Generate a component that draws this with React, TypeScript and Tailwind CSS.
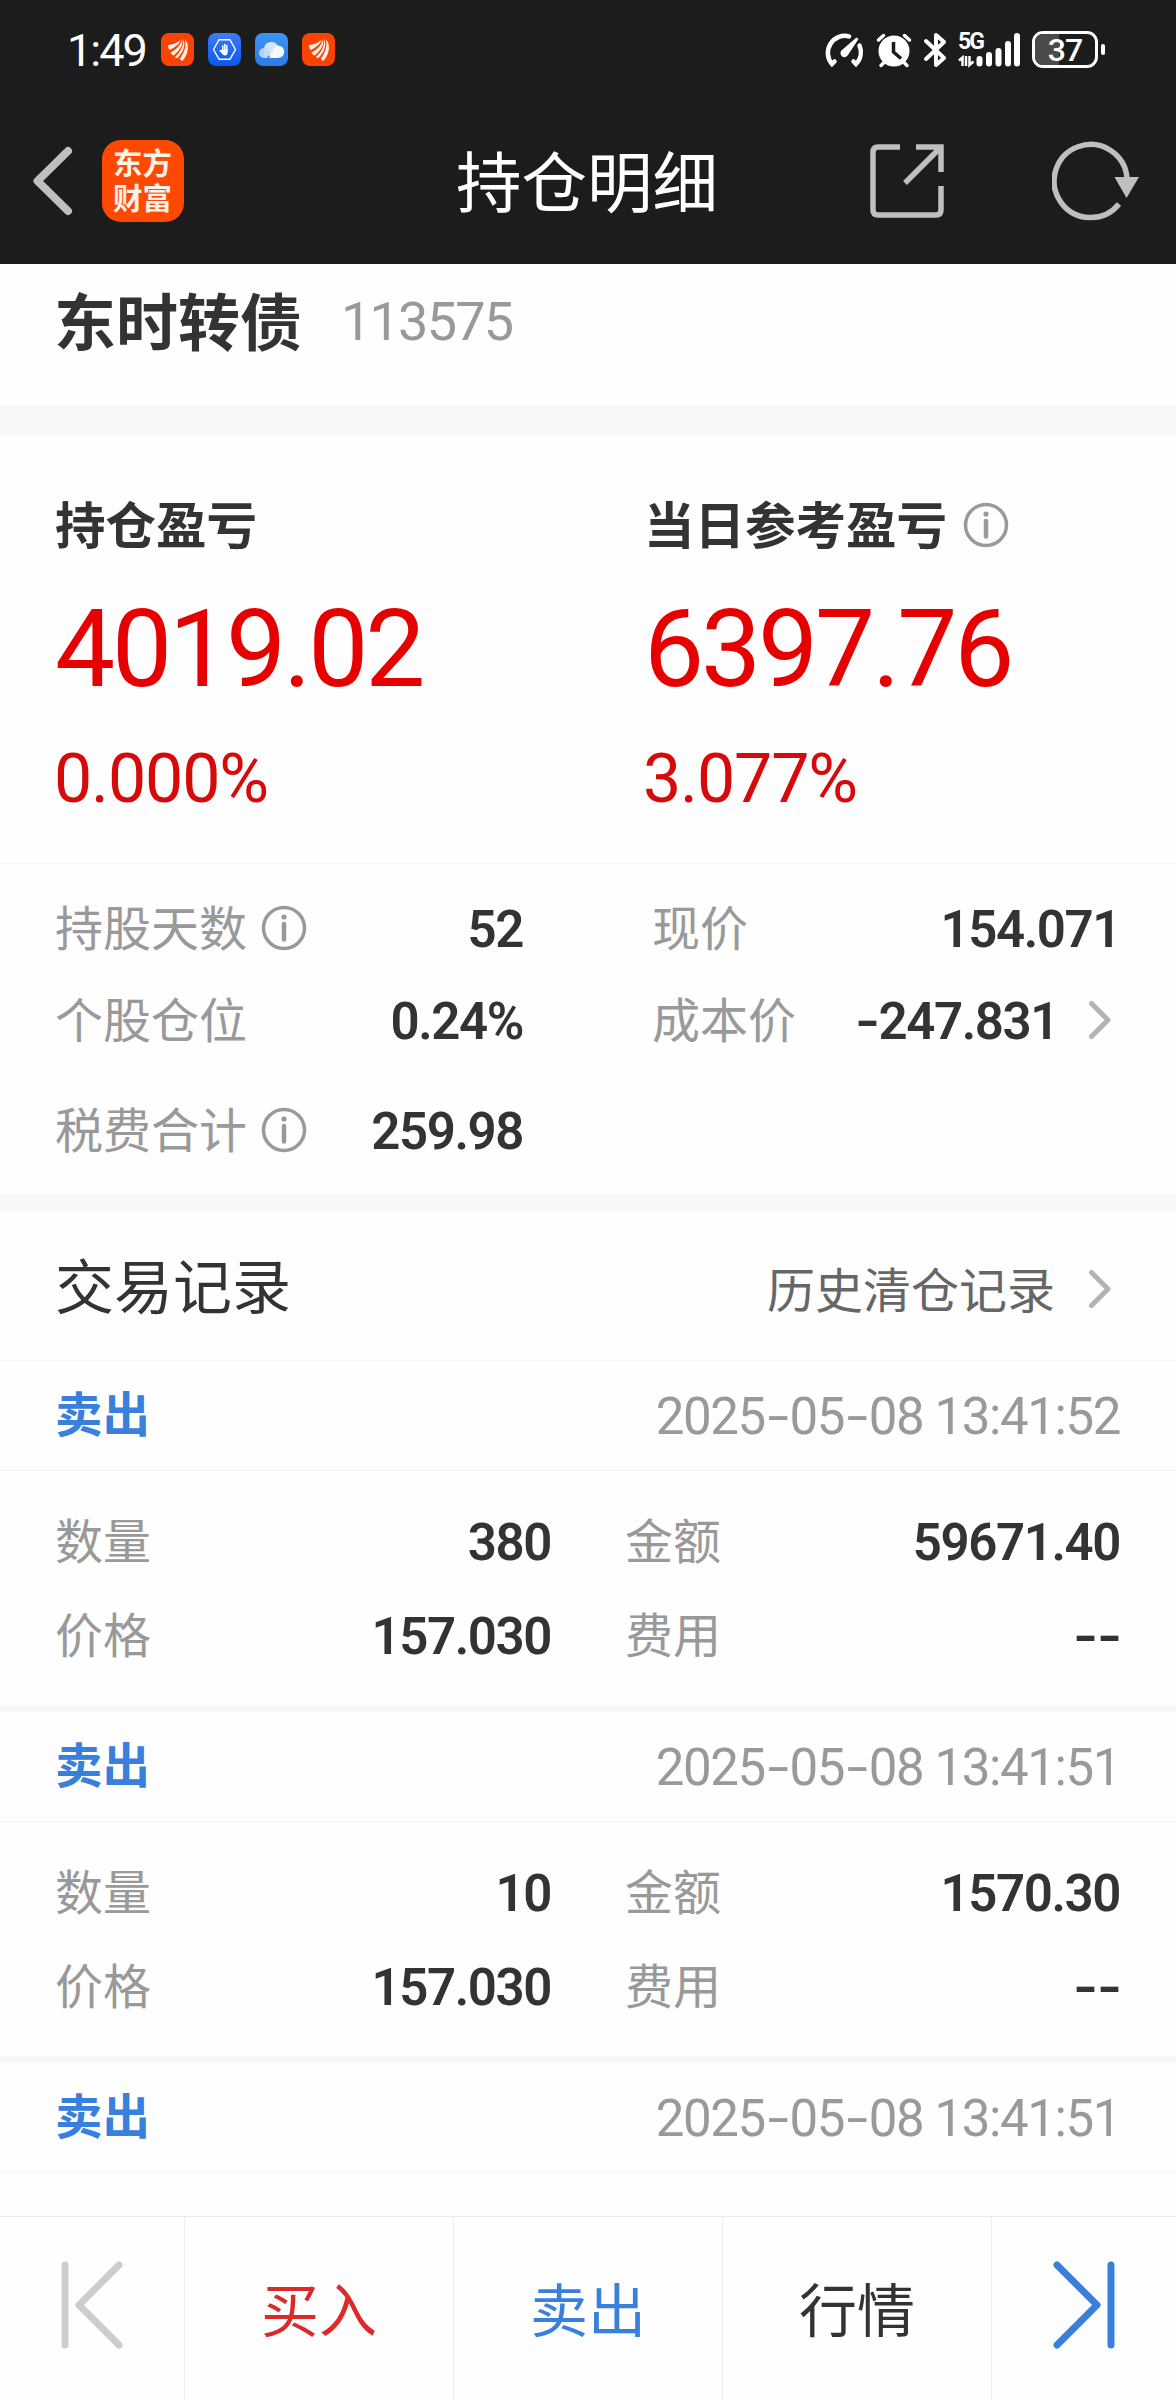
import React from "react";

const cjk = "font-['Noto_Sans_CJK_SC',sans-serif]";
const num = "font-[Roboto,'Noto_Sans_CJK_SC',sans-serif]";

const records = [
  {
    time: "2025-05-08 13:41:52",
    amount: "380",
    price: "157.030",
    total: "59671.40",
    fee: "--",
  },
  {
    time: "2025-05-08 13:41:51",
    amount: "10",
    price: "157.030",
    total: "1570.30",
    fee: "--",
  },
  { time: "2025-05-08 13:41:51" },
];

const EastMoneyBadge = () => (
  <svg width="33" height="33" viewBox="0 0 33 33">
    <rect width="33" height="33" rx="8" fill="#fa4300" />
    <g fill="#fff1ea">
      <path d="M6.800 12.200C11.500 11.500 16 9.800 19.500 7C18.500 11 14 14.500 8.500 17Q7 15 6.800 12.200Z" />
      <path d="M9.500 19.500C15.500 16.500 19.500 12.500 21 6.300C22.500 12 18.500 18 12.500 22.500Q10.500 21.800 9.500 19.500Z" />
      <path d="M14 24C19.500 19 22.500 13.500 22.300 6C25 13 22 19 16.500 25Q15 25.200 14 24Z" />
      <path d="M18.800 25.500C23.500 19.500 25.500 13 24 6.200C28.500 11 28 20 21.500 28Q20 27.500 18.800 25.500Z" />
    </g>
  </svg>
);

const HandBadge = () => (
  <svg width="33" height="33" viewBox="0 0 33 33">
    <defs>
      <linearGradient id="hand" x1="0" y1="0" x2="0" y2="1">
        <stop offset="0" stopColor="#3f7cf8" />
        <stop offset="1" stopColor="#0b57f0" />
      </linearGradient>
    </defs>
    <rect width="33" height="33" rx="8" fill="url(#hand)" />
    <path
      d="M11 6.800H22L27.500 16.500L22 26.200H11L5.500 16.500Z"
      fill="none"
      stroke="#fff"
      strokeWidth="1.400"
      strokeLinejoin="round"
    />
    <path
      d="M14.800 13V18M16.800 11.500V18M18.800 12.500V19M12 17.500L15 20"
      stroke="#fff"
      strokeWidth="1.500"
      strokeLinecap="round"
    />
    <path d="M12 17L19.600 16.500V19.500Q19.500 22.500 17 22.500Q15 22.500 12 18Z" fill="#fff" />
  </svg>
);

const CloudBadge = () => (
  <svg width="33" height="33" viewBox="0 0 33 33">
    <defs>
      <linearGradient id="sky" x1="0" y1="0" x2="0" y2="1">
        <stop offset="0" stopColor="#3a97f3" />
        <stop offset="1" stopColor="#2f78ea" />
      </linearGradient>
    </defs>
    <rect width="33" height="33" rx="8" fill="url(#sky)" />
    <path d="M9 15A7.500 7.500 0 0 1 23 13L15 24Z" fill="#d5e5fb" />
    <circle cx="9" cy="20" r="5" fill="#b5d1f8" />
    <path d="M9 15Q14 15 15 20L12 25H9Z" fill="#c4daf9" />
    <path d="M14 25C17 22 17 14.500 23 12.500A6.200 6.200 0 0 1 23 25Z" fill="#f6faff" />
  </svg>
);

const StatusIcons = () => (
  <div className="flex items-center text-white">
    <svg width="40" height="36" viewBox="0 0 40 36" className="mr-[12px]">
      <g fill="none" stroke="#fff" strokeWidth="4.500" strokeLinecap="round">
        <path d="M25 4.400A17 17 0 0 0 8 32L10.500 29.500" />
        <path d="M35.500 13.500A17 17 0 0 1 32 32L29.500 29.500" />
      </g>
      <path d="M32.500 5.500L34.500 7L24 23A4 4 0 1 1 18 18Z" fill="#fff" />
    </svg>
    <svg width="36" height="36" viewBox="0 0 36 36" className="mr-[12px]">
      <circle cx="18" cy="19" r="15.500" fill="#fff" />
      <g stroke="#fff" strokeWidth="3.500" strokeLinecap="round">
        <path d="M2.500 8L7.500 3.500M33.500 8L28.500 3.500M5 33.500L9 29.500M31 33.500L27 29.500" />
      </g>
      <path d="M17.500 10V20L25 26.500" fill="none" stroke="#1c1c1c" strokeWidth="3.500" />
    </svg>
    <svg width="22" height="36" viewBox="0 0 22 36" className="mr-[12px]">
      <path
        d="M2 9L20 26L12 33V3L20 10L2 27"
        fill="none"
        stroke="#fff"
        strokeWidth="4"
        strokeLinecap="round"
        strokeLinejoin="round"
      />
    </svg>
    <div className="relative mr-[12px] h-9 w-[62px]">
      <span
        className={`${num} absolute top-px left-0 text-[23px] leading-[18px] font-bold tracking-[-2px]`}
      >
        5G
      </span>
      <svg width="62" height="36" viewBox="0 0 62 36">
        <g stroke="#fff" strokeWidth="2.500" fill="none">
          <path d="M1 28.500L4.500 25.500V34M8 24V34" />
          <path d="M11.500 24V33L15.500 29.500" />
        </g>
        <g stroke="#fff" strokeWidth="6" strokeLinecap="round">
          <path d="M21.500 27V31.500M31 23V31.500M40.500 19V31.500M50 12V31.500M59 4V31.500" />
        </g>
      </svg>
    </div>
    <div className="relative h-[37px] w-[66px] overflow-hidden rounded-[11px] border-[3px] border-white">
      <div className="h-full w-6 bg-[#4b4b4b]" />
      <span
        className={`${num} absolute inset-0 text-center text-[32px] leading-[32px] font-medium tracking-[-1px]`}
      >
        37
      </span>
    </div>
    <div className="ml-[3px] h-[11px] w-1 rounded-full bg-white" />
  </div>
);

const InfoIcon = () => (
  <svg width="46" height="46" viewBox="0 0 46 46" className="shrink-0">
    <circle cx="23" cy="23" r="20.500" fill="none" stroke="#999" strokeWidth="3.500" />
    <circle cx="23" cy="12" r="2.600" fill="#999" />
    <path d="M23 19V34.500" stroke="#999" strokeWidth="4.500" strokeLinecap="round" />
  </svg>
);

const RightArrow = () => (
  <svg width="24" height="40" viewBox="0 0 24 40" className="shrink-0">
    <path
      d="M3.500 3.500L20 20L3.500 36.500"
      fill="none"
      stroke="#b3b3b3"
      strokeWidth="5"
      strokeLinecap="round"
      strokeLinejoin="round"
    />
  </svg>
);

// Roboto's hyphen is short next to its figures, so it is widened a little
const Figures = ({ text, hyphen }: { text: string; hyphen: string }) => (
  <>
    {text.split(/(-)/).map((part, index) =>
      part === "-" ? (
        <span key={index} className={`inline-block ${hyphen}`}>
          -
        </span>
      ) : (
        part
      ),
    )}
  </>
);

const Label = ({ children }: { children: React.ReactNode }) => (
  <span className="-ml-px pb-[7px] text-[48px] leading-none font-normal text-[#999]">
    {children}
  </span>
);

const Value = ({ text }: { text: string }) => (
  <span
    className={`${num} pt-[2px] text-[51px] leading-none font-semibold tracking-[-1.4px] text-[#333]`}
  >
    <Figures text={text} hyphen="mx-[3px] scale-x-[1.3]" />
  </span>
);

const Profit = ({ amount, percent }: { amount: string; percent: string }) => (
  <>
    <div
      className={`${num} mt-[31px] text-[107px] leading-[126px] tracking-[-3.1px] text-[#e60000]`}
    >
      {amount}
    </div>
    <div
      className={`${num} mt-[25px] -ml-px text-[68px] leading-[82px] tracking-[-1.1px] text-[#d60a0a]`}
    >
      {percent}
    </div>
  </>
);

const App = () => {
  return (
    <div
      className={`${cjk} flex h-[2400px] w-[1176px] flex-col overflow-hidden bg-[#fefefe] whitespace-nowrap text-[#333]`}
    >
      <header className="h-[264px] shrink-0 bg-[#1c1c1c]">
        <div className="flex h-[99px] items-center pl-[67px]">
          <span
            className={`${num} w-[94px] pt-[2px] text-[45px] leading-none tracking-[-2px] text-white`}
          >
            1:49
          </span>
          <div className="flex gap-[14px]">
            <EastMoneyBadge />
            <HandBadge />
            <CloudBadge />
            <EastMoneyBadge />
          </div>
          <div className="mr-[71px] ml-auto">
            <StatusIcons />
          </div>
        </div>
        <div className="flex h-[165px] items-center pr-9 pb-px pl-[30px]">
          <div className="flex w-[350px] items-center">
            <svg width="44" height="70" viewBox="0 0 44 70">
              <path
                d="M38 5L7.500 35L38 65"
                fill="none"
                stroke="#bfbfbf"
                strokeWidth="8"
                strokeLinecap="round"
                strokeLinejoin="round"
              />
            </svg>
            <div className="ml-7 flex h-[82px] w-[82px] items-center justify-center rounded-[19px] bg-[#ff4800] pb-1">
              <span className="w-[60px] text-[29.5px] leading-[35px] font-bold break-all whitespace-normal text-[#fff3ec]">
                东方财富
              </span>
            </div>
          </div>
          <h1 className="flex-1 pb-[5px] pl-1 text-center text-[65.5px] leading-none font-normal text-white">
            持仓明细
          </h1>
          <div className="flex w-[350px] items-center justify-end">
            <svg width="76" height="76" viewBox="0 0 76 76" className="mr-[107px]">
              <g fill="none" stroke="#bfbfbf" strokeWidth="5.500">
                <path d="M31 4H9Q4 4 4 9V67Q4 72 9 72H67Q72 72 72 67V43" />
                <path d="M47 4H72V29M71 5L36 40" />
              </g>
            </svg>
            <svg width="88" height="80" viewBox="0 0 88 80">
              <path
                d="M75 37A36.500 36.500 0 1 0 67 63"
                fill="none"
                stroke="#bfbfbf"
                strokeWidth="5.500"
              />
              <path d="M62.500 36H87L74.500 57Z" fill="#bfbfbf" />
            </svg>
          </div>
        </div>
      </header>

      <div className="flex h-[142px] shrink-0 items-center pb-[28px] pl-[54px]">
        <h2 className="pb-[5px] text-[62px] leading-none font-semibold">东时转债</h2>
        <span
          className={`${num} ml-[39px] pt-[2px] text-[54px] leading-none tracking-[-1.8px] text-[#999]`}
        >
          113575
        </span>
      </div>
      <div className="h-[29px] shrink-0 bg-[#f6f8fa]" />

      <section className="flex h-[429px] shrink-0 border-b border-[#f5f5f5] pt-[59px] pl-[55px]">
        <div className="w-[589px]">
          <div className="flex h-[62px] items-center">
            <h3 className="pb-[5px] text-[50.5px] leading-none font-semibold">
              持仓盈亏
            </h3>
          </div>
          <Profit amount="4019.02" percent="0.000%" />
        </div>
        <div>
          <div className="flex h-[62px] items-center">
            <h3 className="mr-4 pb-[5px] text-[50.5px] leading-none font-semibold">
              当日参考盈亏
            </h3>
            <InfoIcon />
          </div>
          <Profit amount="6397.76" percent="3.077%" />
        </div>
      </section>

      <section className="flex h-[330px] shrink-0 justify-between pt-[18px] pr-14 pl-14">
        <div className="w-[467px]">
          <div className="flex h-[92px] items-center justify-between">
            <div className="flex items-center gap-[14px]">
              <Label>持股天数</Label>
              <InfoIcon />
            </div>
            <Value text="52" />
          </div>
          <div className="flex h-[92px] items-center justify-between">
            <Label>个股仓位</Label>
            <Value text="0.24%" />
          </div>
          <div className="mt-[18px] flex h-[92px] items-center justify-between">
            <div className="flex items-center gap-[14px]">
              <Label>税费合计</Label>
              <InfoIcon />
            </div>
            <Value text="259.98" />
          </div>
        </div>
        <div className="w-[467px]">
          <div className="flex h-[92px] items-center justify-between">
            <Label>现价</Label>
            <Value text="154.071" />
          </div>
          <div className="flex h-[92px] items-center">
            <Label>成本价</Label>
            <div className="mr-2 ml-auto flex items-center gap-[30px]">
              <Value text="-247.831" />
              <RightArrow />
            </div>
          </div>
        </div>
      </section>
      <div className="h-[18px] shrink-0 bg-[#f6f8fa]" />

      <div className="flex h-[149px] shrink-0 items-center justify-between border-b border-[#f5f5f5] pr-16 pl-[55px]">
        <h2 className="pb-[5px] text-[59px] leading-none font-normal">交易记录</h2>
        <div className="flex items-center gap-[33px] pt-[6px]">
          <span className="pb-[5px] text-[48px] leading-none font-normal text-[#666]">
            历史清仓记录
          </span>
          <RightArrow />
        </div>
      </div>

      <main className="min-h-0 flex-1 overflow-hidden">
        {records.map((record, index) => (
          <div key={index} className="h-[351px] border-b-[7px] border-[#f6f8fa]">
            <div className="flex h-[110px] items-center justify-between border-b border-[#f5f5f5] pr-14 pl-[55px]">
              <span className="pb-[8px] text-[47.5px] leading-none font-semibold text-[#3880dc]">
                卖出
              </span>
              <span
                className={`${num} pt-px text-[51px] leading-none tracking-[-1.4px] text-[#999]`}
              >
                <Figures text={record.time} hyphen="mx-[6px] scale-x-[1.5]" />
              </span>
            </div>
            {record.amount && (
              <div className="flex justify-between px-14 pt-[23px]">
                <div className="w-[495px]">
                  <div className="flex h-[94px] items-center justify-between">
                    <Label>数量</Label>
                    <Value text={record.amount} />
                  </div>
                  <div className="flex h-[94px] items-center justify-between">
                    <Label>价格</Label>
                    <Value text={record.price} />
                  </div>
                </div>
                <div className="w-[494px]">
                  <div className="flex h-[94px] items-center justify-between">
                    <Label>金额</Label>
                    <Value text={record.total} />
                  </div>
                  <div className="flex h-[94px] items-center justify-between">
                    <Label>费用</Label>
                    <Value text={record.fee} />
                  </div>
                </div>
              </div>
            )}
          </div>
        ))}
      </main>

      <footer className="flex h-[184px] shrink-0 border-t border-[#e9e9e9] text-[58px] leading-none font-normal">
        <div className="flex w-[185px] items-center justify-center border-r border-[#ececec] pb-[7px]">
          <svg width="62" height="88" viewBox="0 0 62 88">
            <path
              d="M4 4V84M58 4L18 44L58 84"
              fill="none"
              stroke="#cdcdcd"
              strokeWidth="7"
              strokeLinecap="round"
              strokeLinejoin="round"
            />
          </svg>
        </div>
        <div className="flex w-[269px] items-center justify-center border-r border-[#ececec] pb-1 text-[#dc2a2a]">
          买入
        </div>
        <div className="flex w-[269px] items-center justify-center border-r border-[#ececec] pb-1 text-[#3880dc]">
          卖出
        </div>
        <div className="flex w-[269px] items-center justify-center border-r border-[#ececec] pb-1">
          行情
        </div>
        <div className="flex flex-1 items-center justify-center pb-[7px]">
          <svg width="62" height="88" viewBox="0 0 62 88">
            <path
              d="M58 4V84M4 4L44 44L4 84"
              fill="none"
              stroke="#3880dc"
              strokeWidth="7"
              strokeLinecap="round"
              strokeLinejoin="round"
            />
          </svg>
        </div>
      </footer>
    </div>
  );
};

export default App;
